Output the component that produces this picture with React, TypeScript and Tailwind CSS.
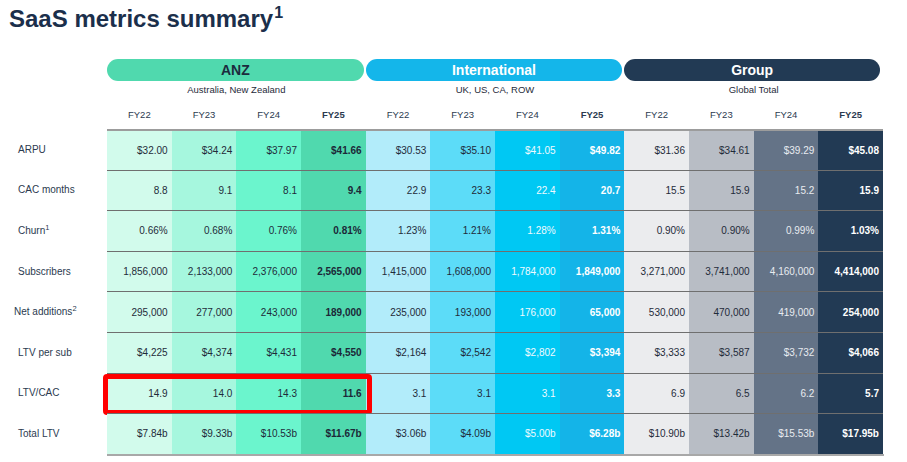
const FONT = { fontFamily: '"Liberation Sans", Arial, sans-serif' };

type Region = {
  name: string;
  subtitle: string;
  pill: string;
  pillText: string;
  cells: { bg: string; text: string }[];
};

const REGIONS: Region[] = [
  {
    name: "ANZ",
    subtitle: "Australia, New Zealand",
    pill: "bg-[#50d9ae] mr-[2px]",
    pillText: "text-[#1c2b3e]",
    cells: [
      { bg: "bg-[#d2fbec]", text: "text-[#1f2b3a]" },
      { bg: "bg-[#a6f7de]", text: "text-[#1f2b3a]" },
      { bg: "bg-[#6bf5cd]", text: "text-[#1f2b3a]" },
      { bg: "bg-[#50d9ae]", text: "text-[#1c2838] font-bold" },
    ],
  },
  {
    name: "International",
    subtitle: "UK, US, CA, ROW",
    pill: "bg-[#14b6ea] mr-[2px]",
    pillText: "text-white",
    cells: [
      { bg: "bg-[#b2ecfa]", text: "text-[#1f2b3a]" },
      { bg: "bg-[#5cdcf8]", text: "text-[#1f2b3a]" },
      { bg: "bg-[#00c8f3]", text: "text-[#eefaff]" },
      { bg: "bg-[#14b4e8]", text: "text-white font-bold" },
    ],
  },
  {
    name: "Group",
    subtitle: "Global Total",
    pill: "bg-[#223a54] mr-[3px]",
    pillText: "text-white",
    cells: [
      { bg: "bg-[#ebecee]", text: "text-[#1f2b3a]" },
      { bg: "bg-[#b8bdc5]", text: "text-[#1f2b3a]" },
      { bg: "bg-[#647387]", text: "text-[#e8ebf0]" },
      { bg: "bg-[#223a54]", text: "text-white font-bold" },
    ],
  },
];

const YEARS = ["FY22", "FY23", "FY24", "FY25"];

type Row = { label: string; sup?: string; shift?: boolean; values: string[] };

const ROWS: Row[] = [
  {
    label: "ARPU",
    values: ["$32.00", "$34.24", "$37.97", "$41.66", "$30.53", "$35.10", "$41.05", "$49.82", "$31.36", "$34.61", "$39.29", "$45.08"],
  },
  {
    label: "CAC months",
    values: ["8.8", "9.1", "8.1", "9.4", "22.9", "23.3", "22.4", "20.7", "15.5", "15.9", "15.2", "15.9"],
  },
  {
    label: "Churn",
    sup: "1",
    values: ["0.66%", "0.68%", "0.76%", "0.81%", "1.23%", "1.21%", "1.28%", "1.31%", "0.90%", "0.90%", "0.99%", "1.03%"],
  },
  {
    label: "Subscribers",
    values: ["1,856,000", "2,133,000", "2,376,000", "2,565,000", "1,415,000", "1,608,000", "1,784,000", "1,849,000", "3,271,000", "3,741,000", "4,160,000", "4,414,000"],
  },
  {
    label: "Net additions",
    sup: "2",
    shift: true,
    values: ["295,000", "277,000", "243,000", "189,000", "235,000", "193,000", "176,000", "65,000", "530,000", "470,000", "419,000", "254,000"],
  },
  {
    label: "LTV per sub",
    values: ["$4,225", "$4,374", "$4,431", "$4,550", "$2,164", "$2,542", "$2,802", "$3,394", "$3,333", "$3,587", "$3,732", "$4,066"],
  },
  {
    label: "LTV/CAC",
    values: ["14.9", "14.0", "14.3", "11.6", "3.1", "3.1", "3.1", "3.3", "6.9", "6.5", "6.2", "5.7"],
  },
  {
    label: "Total LTV",
    values: ["$7.84b", "$9.33b", "$10.53b", "$11.67b", "$3.06b", "$4.09b", "$5.00b", "$6.28b", "$10.90b", "$13.42b", "$15.53b", "$17.95b"],
  },
];

const CELLS = REGIONS.flatMap((r) => r.cells);

function DataRow({ row, index }: { row: Row; index: number }) {
  const first = index === 0;
  const highlight = row.label === "LTV/CAC";
  return (
    <div className="flex h-[40.6px]">
      <div
        className={`flex w-[107px] shrink-0 items-center text-[10px] text-[#2b3a4f] ${
          row.shift ? "pl-[14px]" : "pl-[18px]"
        }`}
      >
        <span>
          {row.label}
          {row.sup ? (
            <span className="relative top-[-4px] text-[7.5px] leading-none">{row.sup}</span>
          ) : null}
        </span>
      </div>
      <div className="relative grid w-[776px] grid-cols-[repeat(12,minmax(0,1fr))]">
        {row.values.map((v, i) => (
          <div
            key={i}
            className={`flex items-center justify-end pr-[4px] text-[10px] ${CELLS[i].bg} ${CELLS[i].text} ${
              first ? "border-t-2 border-[#9c9c9c]" : "border-t border-[#6f6f6f]"
            }`}
          >
            {v}
          </div>
        ))}
        {highlight ? (
          <div className="pointer-events-none absolute left-[-4px] top-[1px] h-[41px] w-[269px] rounded-[4px] border-[5px] border-[#ff0000]" />
        ) : null}
      </div>
    </div>
  );
}

export default function App() {
  return (
    <div className="h-[462px] w-[907px] overflow-hidden bg-white" style={FONT}>
      <h1 className="h-[34px] pl-[9px] pt-[4px] text-[24px] font-bold leading-[30px] text-[#1b2f4b]">
        SaaS metrics summary
        <span className="relative top-[-9px] ml-[1px] text-[16px] font-bold leading-none">1</span>
      </h1>

      <div className="mt-[25px] flex">
        <div className="w-[107px] shrink-0" />
        <div className="grid w-[776px] grid-cols-3">
          {REGIONS.map((r) => (
            <div key={r.name} className="flex flex-col">
              <div
                className={`flex h-[22px] items-center justify-center rounded-full text-[14px] font-bold ${r.pill} ${r.pillText}`}
              >
                {r.name}
              </div>
              <div className="flex h-[18px] items-center justify-center text-[9.5px] text-[#1f2b3a]">
                {r.subtitle}
              </div>
            </div>
          ))}
        </div>
      </div>

      <div className="flex h-[30px]">
        <div className="w-[107px] shrink-0" />
        <div className="grid w-[776px] grid-cols-[repeat(12,minmax(0,1fr))]">
          {REGIONS.flatMap((r) =>
            YEARS.map((y) => (
              <div
                key={r.name + y}
                className={`flex items-center justify-center pt-[2px] text-[9.5px] text-[#2b3a4f] ${
                  y === "FY25" ? "font-bold text-[#1c2838]" : ""
                }`}
              >
                {y}
              </div>
            ))
          )}
        </div>
      </div>

      <div className="flex flex-col">
        {ROWS.map((row, i) => (
          <DataRow key={row.label} row={row} index={i} />
        ))}
        <div className="flex">
          <div className="w-[107px] shrink-0" />
          <div className="h-[2px] w-[777px] bg-[#a8a8a8]" />
        </div>
      </div>
    </div>
  );
}
